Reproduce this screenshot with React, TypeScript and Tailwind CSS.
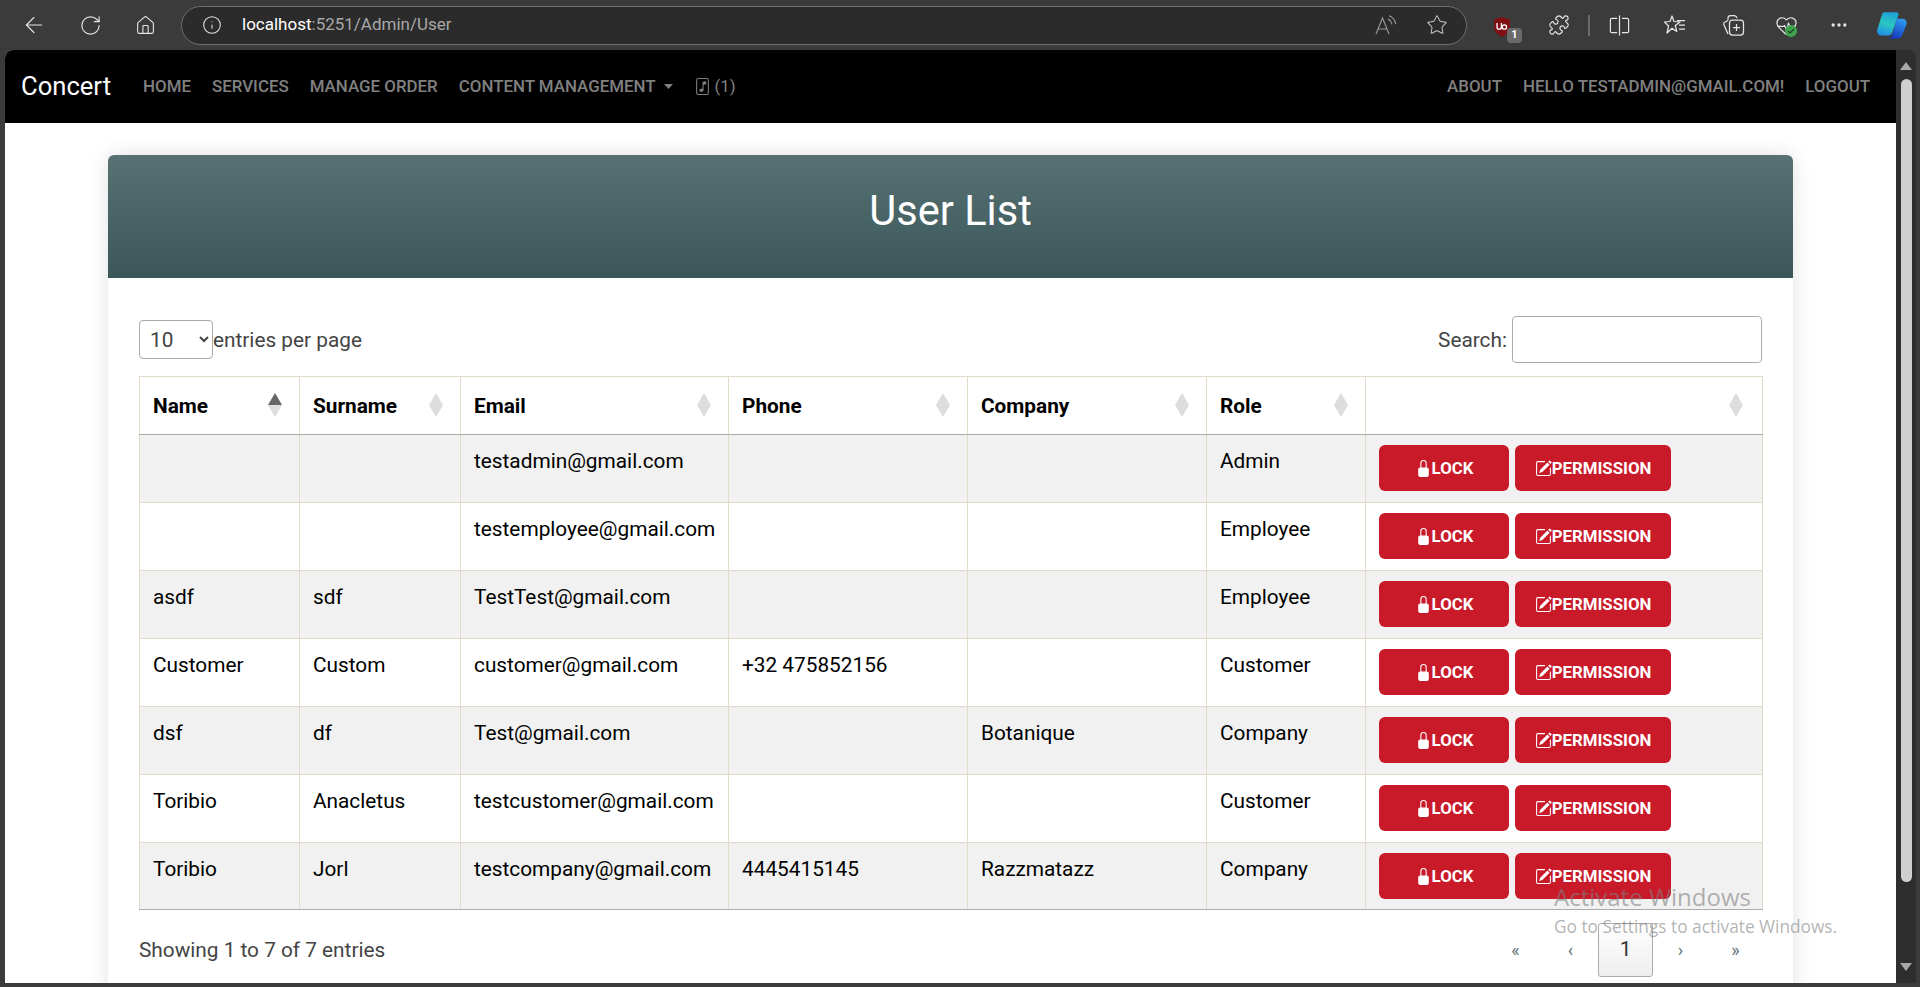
import React from "react";
import { ArrowLeft, RotateCw, Home, Info, Star, Puzzle, HeartPulse, MoreHorizontal } from "lucide-react";
import { BsLockFill, BsPencilSquare, BsFileMusic } from "react-icons/bs";

const rows = [
  ["", "", "testadmin@gmail.com", "", "", "Admin"],
  ["", "", "testemployee@gmail.com", "", "", "Employee"],
  ["asdf", "sdf", "TestTest@gmail.com", "", "", "Employee"],
  ["Customer", "Custom", "customer@gmail.com", "+32 475852156", "", "Customer"],
  ["dsf", "df", "Test@gmail.com", "", "Botanique", "Company"],
  ["Toribio", "Anacletus", "testcustomer@gmail.com", "", "", "Customer"],
  ["Toribio", "Jorl", "testcompany@gmail.com", "4445415145", "Razzmatazz", "Company"],
];
const heads = ["Name", "Surname", "Email", "Phone", "Company", "Role", ""];
const widths = [160, 161, 268, 239, 239, 159, 397];

function Sort({ active }: { active?: boolean }) {
  return (
    <svg width="14" height="24" viewBox="0 0 14 24" className="mt-[-1px] shrink-0">
      <path d="M7 0 L14 12 L0 12 Z" fill={active ? "#666666" : "#dddddd"} />
      <path d="M0 12 L14 12 L7 24 Z" fill="#dddddd" />
    </svg>
  );
}

function Slot({ w, children }: { w: string; children: React.ReactNode }) {
  return <div className={`${w} relative flex items-center justify-center text-[#e6e6e6]`}>{children}</div>;
}

function Toolbar() {
  return (
    <div className="flex h-[50px] shrink-0 items-center bg-[#3b3b3b] pl-[6px]">
      <Slot w="w-[56px]"><ArrowLeft size={26} strokeWidth={1.15} /></Slot>
      <Slot w="w-[56px]"><RotateCw size={23} strokeWidth={1.2} /></Slot>
      <Slot w="w-[55px]"><Home size={21} strokeWidth={1.25} /></Slot>
      <div className="ml-[8px] flex h-[39px] w-[1286px] items-center rounded-full border border-[#707070] bg-[#2b2b2b] pl-[20px] pr-[18px] text-[17px] text-[#a8a8a8]">
        <Info size={20} strokeWidth={1.25} className="text-[#e6e6e6]" />
        <span className="ml-[20px]"><span className="text-white">localhost</span>:5251/Admin/User</span>
        <div className="flex-1" />
        <svg width="22" height="20" viewBox="0 0 22 20" fill="none" stroke="#9c9c9c" strokeWidth="1.1" className="mr-[29px]">
          <path d="M1 19 L7.5 3 L14 19 M3.5 14 H11.5" />
          <path d="M13 4 C15 5 16.5 7 17 9.5" />
          <path d="M14 0.8 C17.5 2 20 5 20.8 9" />
        </svg>
        <Star size={22} strokeWidth={1.1} className="text-[#c8c8c8]" />
      </div>
      <div className="ml-[8px] flex items-center">
        <Slot w="w-[56px]">
          <svg width="18" height="20" viewBox="0 0 18 20" className="ml-[-2px] mt-[3px]">
            <path d="M9 0 L17 2.5 L17 10 C17 15 12.5 18 9 20 C5.5 18 1 15 1 10 L1 2.5 Z" fill="#800f14" />
            <path d="M4 6 V10 A2.2 2.2 0 0 0 8.4 10 V6 M9.2 10 A2.2 2.2 0 1 0 13.6 10 A2.2 2.2 0 1 0 9.2 10" fill="none" stroke="#ffffff" strokeWidth="1.3" />
          </svg>
          <span className="absolute left-[32px] top-[14px] flex h-[15px] w-[15px] items-center justify-center rounded-[4px] bg-[#6a6a6a] text-[11px] font-bold text-white">1</span>
        </Slot>
        <Slot w="w-[56px]"><Puzzle size={22} strokeWidth={1.25} /></Slot>
        <div className="flex w-[4px] justify-center"><div className="h-[21px] w-[2px] bg-[#6a6a6a]" /></div>
        <Slot w="w-[56px]">
          <svg width="23" height="23" viewBox="0 0 24 24" fill="none" stroke="currentColor" strokeWidth="1.25">
            <path d="M9.5 4.5 H4 A1.5 1.5 0 0 0 2.5 6 V18 A1.5 1.5 0 0 0 4 19.5 H9.5" />
            <path d="M12 1.5 V22.5" />
            <path d="M14.5 4.5 H20 A1.5 1.5 0 0 1 21.5 6 V18 A1.5 1.5 0 0 1 20 19.5 H14.5" />
          </svg>
        </Slot>
        <Slot w="w-[56px]">
          <svg width="24" height="24" viewBox="0 0 24 24" fill="none" stroke="currentColor" strokeWidth="1.25" strokeLinejoin="round">
            <path d="M9 3 L11 8.5 L17 9 L12.3 12.5 L13.8 18.5 L9 15.2 L4 20 L5.6 13 L1.5 9 L7 8.5 Z" />
            <path d="M14 7.5 H22 M16 12 H22 M16 16 H22" />
          </svg>
        </Slot>
        <Slot w="w-[60px]">
          <svg width="24" height="24" viewBox="0 0 24 24" fill="none" stroke="currentColor" strokeWidth="1.25" strokeLinejoin="round">
            <path d="M7 21 L3 12 C2.4 10.6 3 9.4 4 9 L7 7.5" />
            <path d="M7 7 V5 C7 3.4 8 2.5 9.5 2.5 H13 C14.6 2.5 15.5 3.4 16 5" />
            <rect x="8.5" y="7" width="14" height="15" rx="3" />
            <path d="M15.5 11 V18 M12 14.5 H19" />
          </svg>
        </Slot>
        <Slot w="w-[46px]">
          <HeartPulse size={23} strokeWidth={1.25} />
          <span className="absolute left-[22px] top-[11px] flex h-[12px] w-[12px] items-center justify-center rounded-full bg-[#3fa34d]">
            <svg width="8" height="8" viewBox="0 0 8 8" fill="none" stroke="#1f3d24" strokeWidth="1.2"><path d="M1 4 L3.2 6 L7 2" /></svg>
          </span>
        </Slot>
        <Slot w="w-[60px]"><MoreHorizontal size={20} strokeWidth={2} /></Slot>
        <Slot w="w-[46px]">
          <svg width="30" height="27" viewBox="0 0 90 80">
            <defs>
              <linearGradient id="cpA" x1="0.6" y1="0" x2="0.3" y2="1"><stop offset="0" stopColor="#1f9fd8" /><stop offset="0.5" stopColor="#2cc7c0" /><stop offset="1" stopColor="#1f8fe8" /></linearGradient>
              <linearGradient id="cpB" x1="0.7" y1="0" x2="0.3" y2="1"><stop offset="0" stopColor="#2e9af0" /><stop offset="1" stopColor="#1535b8" /></linearGradient>
            </defs>
            <path d="M22 0 H58 C64 0 66 4 64 10 L46 60 C43 68 38 70 30 70 H14 C4 70 -2 62 1 52 L14 10 C16 3 18 0 22 0 Z" fill="url(#cpA)" />
            <path d="M60 20 H76 C86 20 91 28 88 38 L76 68 C73 76 68 80 60 80 H30 C38 80 44 76 46 68 Z" fill="url(#cpB)" />
          </svg>
        </Slot>
      </div>
    </div>
  );
}

function Navbar() {
  const link = "text-[16.9px] font-medium uppercase text-[#808080]";
  return (
    <nav className="flex h-[73px] items-center bg-black pl-[16px] pr-[26px]">
      <span className="mr-[32px] text-[25.6px] text-white">Concert</span>
      <div className="flex flex-1 items-center gap-[21px]">
        <a className={link}>Home</a>
        <a className={link}>Services</a>
        <a className={link}>Manage Order</a>
        <a className={`${link} flex items-center`}>
          Content Management
          <svg width="9" height="5" viewBox="0 0 9 5" className="ml-[8px]"><path d="M0 0 H9 L4.5 5 Z" fill="#808080" /></svg>
        </a>
        <a className={`${link} flex items-center !font-normal`}>
          <BsFileMusic size={17} />
          <span className="ml-[4px]">(1)</span>
        </a>
      </div>
      <div className="flex items-center gap-[21px]">
        <a className={link}>About</a>
        <a className={link}>Hello testadmin@gmail.com!</a>
        <a className={link}>Logout</a>
      </div>
    </nav>
  );
}

function ActionButton({ icon, label, w }: { icon: React.ReactNode; label: string; w: string }) {
  return (
    <button className={`${w} flex h-[46px] items-center justify-center rounded-[6px] bg-[#c91a2a] pt-[1px] text-[16.8px] font-bold uppercase text-white`}>
      {icon}
      {label}
    </button>
  );
}

function UserTable() {
  return (
    <table className="w-[1623px] table-fixed border-collapse text-[20.8px] text-black">
      <colgroup>
        {widths.map((w, i) => (
          <col key={i} style={{ width: w }} />
        ))}
      </colgroup>
      <thead>
        <tr className="h-[58px]">
          {heads.map((h, i) => (
            <th key={i} className={`border border-[#e2dacb] border-b-[#a9a9a9] pl-[13px] text-left font-bold ${i === 6 ? "pr-[19px]" : "pr-[17px]"}`}>
              <div className="flex items-center justify-between">
                <span className="pt-[2px]">{h}</span>
                <Sort active={i === 0} />
              </div>
            </th>
          ))}
        </tr>
      </thead>
      <tbody>
        {rows.map((r, i) => (
          <tr key={i} className={`${i === 6 ? "h-[67px]" : "h-[68px]"} ${i % 2 === 0 ? "bg-[#f1f1f1]" : "bg-white"}`}>
            {r.map((c, j) => (
              <td key={j} className={`border border-[#e2dacb] px-[13px] py-[10px] align-top leading-[33px] whitespace-nowrap ${i === 6 ? "border-b-[#ababab]" : ""}`}>
                {c}
              </td>
            ))}
            <td className={`border border-[#e2dacb] px-[13px] py-[10px] align-top ${i === 6 ? "border-b-[#ababab]" : ""}`}>
              <div className="flex gap-[6px]">
                <ActionButton w="w-[130px]" icon={<BsLockFill size={17} />} label="Lock" />
                <ActionButton w="w-[156px]" icon={<BsPencilSquare size={17} />} label="Permission" />
              </div>
            </td>
          </tr>
        ))}
      </tbody>
    </table>
  );
}

function Pagination() {
  const cell = "flex h-[54px] w-[55px] items-center justify-center pb-[2px] text-[18px] text-[#67757c]";
  return (
    <div className="mr-[-1px] flex items-center">
      <span className={cell}>«</span>
      <span className={cell}>‹</span>
      <span className="flex h-[54px] w-[55px] items-center justify-center rounded-[3px] border border-[#ababab] bg-gradient-to-b from-white to-[#eeeeee] text-[#333333]">1</span>
      <span className={cell}>›</span>
      <span className={cell}>»</span>
    </div>
  );
}

export default function App() {
  return (
    <div className="relative flex h-[987px] w-[1920px] flex-col overflow-hidden bg-[#3b3b3b] font-['Roboto',sans-serif]">
      <Toolbar />
      <div className="flex min-h-0 flex-1 pb-[4px] pl-[5px] pr-[4px]">
        <div className="min-w-0 flex-1 overflow-hidden rounded-tl-[8px] bg-white">
          <Navbar />
          <div className="mx-[103px] mt-[32px] rounded-[6px] bg-white shadow-[0_0_20px_rgba(0,0,0,0.12)]">
            <div className="flex h-[123px] items-center justify-center rounded-t-[6px] bg-gradient-to-b from-[#587274] to-[#3b5759] pb-[10px] text-[41.6px] text-white">
              User List
            </div>
            <div className="px-[31px] pb-[20px] pt-[38px] text-[20.8px] text-[#444444]">
              <div className="flex h-[47px] items-center justify-between">
                <label className="flex items-center">
                  <select defaultValue="10" className="h-[39px] w-[74px] rounded-[4px] border border-[#aaaaaa] bg-white pl-[6px] text-[#444444]">
                    <option>10</option>
                    <option>25</option>
                    <option>50</option>
                  </select>
                  <span className="pt-[2px]">entries per page</span>
                </label>
                <label className="flex items-center gap-[5px]">
                  <span className="pt-[2px]">Search:</span>
                  <input className="h-[47px] w-[250px] rounded-[4px] border border-[#aaaaaa] bg-white" />
                </label>
              </div>
              <div className="mt-[13px]">
                <UserTable />
              </div>
              <div className="mt-[13px] flex items-center justify-between">
                <span className="pt-[2px]">Showing 1 to 7 of 7 entries</span>
                <Pagination />
              </div>
            </div>
          </div>
        </div>
        <div className="relative flex w-[20px] shrink-0 flex-col items-center rounded-tr-[8px] bg-[#2e2e2e] pt-[12px]">
          <svg width="12" height="8" viewBox="0 0 12 8"><path d="M6 0 L12 8 H0 Z" fill="#a8a8a8" /></svg>
          <div className="mt-[9px] h-[803px] w-[11px] rounded-full bg-[#cfcfcf]" />
          <div className="flex-1" />
          <svg width="12" height="8" viewBox="0 0 12 8" className="mb-[12px]"><path d="M0 0 H12 L6 8 Z" fill="#a8a8a8" /></svg>
        </div>
      </div>
      <div className="pointer-events-none absolute left-[1554px] top-[881px] font-['Open_Sans',sans-serif] text-[#808080]/60">
        <div className="text-[24px] leading-[32px]">Activate Windows</div>
        <div className="mt-[2px] text-[17.3px] leading-[24px]">Go to Settings to activate Windows.</div>
      </div>
    </div>
  );
}
